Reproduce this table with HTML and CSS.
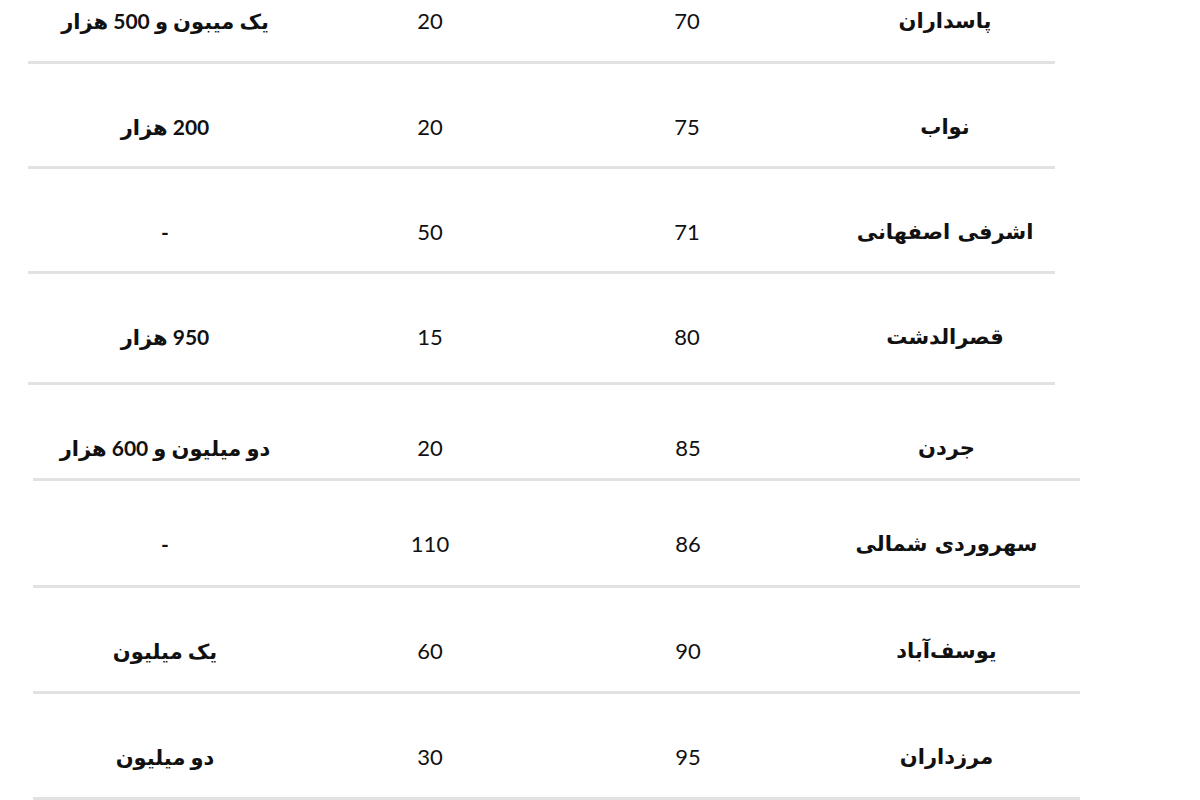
FILE: index.html
```html
<!DOCTYPE html>
<html lang="fa" dir="rtl">
<head>
<meta charset="utf-8">
<title>جدول</title>
<link rel="stylesheet" href="styles.css">
</head>
<body>
<div class="sheet">
  <div class="group group-a">
    <div class="row h103"><div class="cell name">پاسداران</div><div class="cell num">70</div><div class="cell num">20</div><div class="cell txt">یک میبون و 500 هزار</div></div>
    <div class="row h102"><div class="cell name">نواب</div><div class="cell num">75</div><div class="cell num">20</div><div class="cell txt">200 هزار</div></div>
    <div class="row h102"><div class="cell name">اشرفی اصفهانی</div><div class="cell num">71</div><div class="cell num">50</div><div class="cell txt">-</div></div>
    <div class="row h108"><div class="cell name">قصرالدشت</div><div class="cell num">80</div><div class="cell num">15</div><div class="cell txt">950 هزار</div></div>
  </div>
  <div class="group group-b">
    <div class="row h93"><div class="cell name">جردن</div><div class="cell num">85</div><div class="cell num">20</div><div class="cell txt">دو میلیون و 600 هزار</div></div>
    <div class="row h104"><div class="cell name">سهروردی شمالی</div><div class="cell num">86</div><div class="cell num">110</div><div class="cell txt">-</div></div>
    <div class="row h103"><div class="cell name">یوسف‌آباد</div><div class="cell num">90</div><div class="cell num">60</div><div class="cell txt">یک میلیون</div></div>
    <div class="row h103"><div class="cell name">مرزداران</div><div class="cell num">95</div><div class="cell num">30</div><div class="cell txt">دو میلیون</div></div>
  </div>
</div>
</body>
</html>
```

FILE: styles.css
```css
html, body {
  margin: 0;
  padding: 0;
  background: #ffffff;
}

body {
  width: 1200px;
  height: 800px;
  overflow: hidden;
  font-family: "Lato", "DejaVu Sans", sans-serif;
  color: #111111;
}

.sheet {
  margin-top: -42px;
}

.group-a {
  margin-right: 145px;
  width: 1027px;
}

.group-b {
  margin-right: 120px;
  width: 1047px;
}

.row {
  display: grid;
  border-bottom: 3px solid #e2e2e2;
  box-sizing: content-box;
}

.group-a .row {
  grid-template-columns: 1fr 258px 256px 274px;
}

.group-b .row {
  grid-template-columns: 1fr 250px 266px 264px;
}

.group-a .name {
  padding-left: 19px;
}

.h93 { height: 93px; }
.h102 { height: 102px; }
.h103 { height: 103px; }
.h104 { height: 104px; }
.h108 { height: 108px; }

.cell {
  text-align: center;
  padding-top: 48px;
  line-height: 30px;
  white-space: nowrap;
}

.name {
  font-family: "DejaVu Sans", sans-serif;
  font-weight: bold;
  font-size: 21px;
}

.num {
  font-size: 22px;
}

.txt {
  font-size: 21px;
  font-weight: bold;
}
```
